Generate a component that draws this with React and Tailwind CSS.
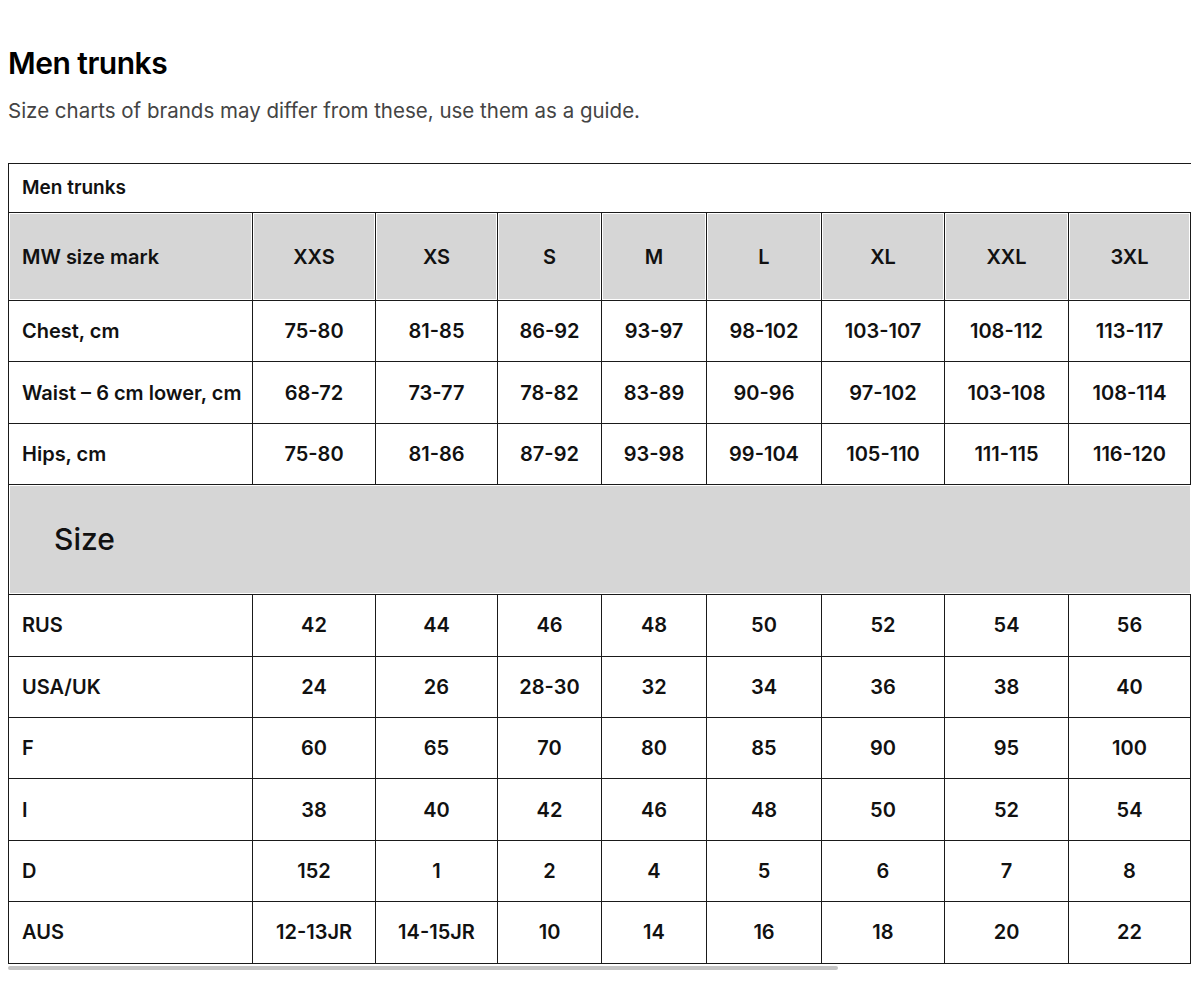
const sizes = ["XXS", "XS", "S", "M", "L", "XL", "XXL", "3XL"];

const measures = [
  ["Chest, cm", "75-80", "81-85", "86-92", "93-97", "98-102", "103-107", "108-112", "113-117"],
  ["Waist – 6 cm lower, cm", "68-72", "73-77", "78-82", "83-89", "90-96", "97-102", "103-108", "108-114"],
  ["Hips, cm", "75-80", "81-86", "87-92", "93-98", "99-104", "105-110", "111-115", "116-120"],
];

const conversions = [
  ["RUS", "42", "44", "46", "48", "50", "52", "54", "56"],
  ["USA/UK", "24", "26", "28-30", "32", "34", "36", "38", "40"],
  ["F", "60", "65", "70", "80", "85", "90", "95", "100"],
  ["I", "38", "40", "42", "46", "48", "50", "52", "54"],
  ["D", "152", "1", "2", "4", "5", "6", "7", "8"],
  ["AUS", "12-13JR", "14-15JR", "10", "14", "16", "18", "20", "22"],
];

const colWidths = ["w-[244px]", "w-[123px]", "w-[122px]", "w-[104px]", "w-[105px]", "w-[115px]", "w-[123px]", "w-[124px]", "w-[122px]"];

function DataRow({ row }) {
  return (
    <tr className="h-[61.4px]">
      {row.map((cell, i) => (
        <td
          key={i}
          className={`border border-[#1a1a1a] text-[20px] font-semibold text-[#111] ${
            i === 0 ? "text-left pl-[13px]" : "text-center"
          }`}
        >
          {cell}
        </td>
      ))}
    </tr>
  );
}

export default function App() {
  return (
    <div className="bg-white min-h-screen w-[1200px] overflow-hidden font-['Inter','Liberation_Sans',sans-serif] text-[#111]">
      <div className="pl-2 pt-[44px]">
        <h1 className="text-[30px] leading-[38px] font-semibold tracking-[-0.5px] text-black">Men trunks</h1>
        <p className="mt-[15px] text-[20.5px] leading-[28px] text-[#444]">
          Size charts of brands may differ from these, use them as a guide.
        </p>

        <div className="mt-[38px]">
          <table className="table-fixed border-collapse w-[1182px]">
            <colgroup>
              {colWidths.map((w, i) => (
                <col key={i} className={w} />
              ))}
            </colgroup>
            <tbody>
              <tr className="h-[49px]">
                <td colSpan={9} className="border-t border-l border-b border-[#1a1a1a] pl-[13px] text-[19px] font-semibold text-[#111]">
                  Men trunks
                </td>
              </tr>
              <tr className="h-[88px]">
                <td className="border border-[#1a1a1a] bg-[#d6d6d6] shadow-[inset_0_0_0_1px_#fff] pl-[13px] text-[20px] font-semibold">
                  MW size mark
                </td>
                {sizes.map((s) => (
                  <td key={s} className="border border-[#1a1a1a] bg-[#d6d6d6] shadow-[inset_0_0_0_1px_#fff] text-center text-[20px] font-semibold">
                    {s}
                  </td>
                ))}
              </tr>
              {measures.map((row) => (
                <DataRow key={row[0]} row={row} />
              ))}
              <tr className="h-[110px]">
                <td colSpan={9} className="border-t border-l border-b border-[#1a1a1a] bg-[#d6d6d6] shadow-[inset_0_0_0_1px_#fff] pl-[45px] text-[30px] font-medium text-[#111]">
                  Size
                </td>
              </tr>
              {conversions.map((row) => (
                <DataRow key={row[0]} row={row} />
              ))}
            </tbody>
          </table>
          <div className="mt-[2px] h-[4px] w-[830px] rounded-full bg-[#c4c4c4]" />
        </div>
      </div>
    </div>
  );
}
